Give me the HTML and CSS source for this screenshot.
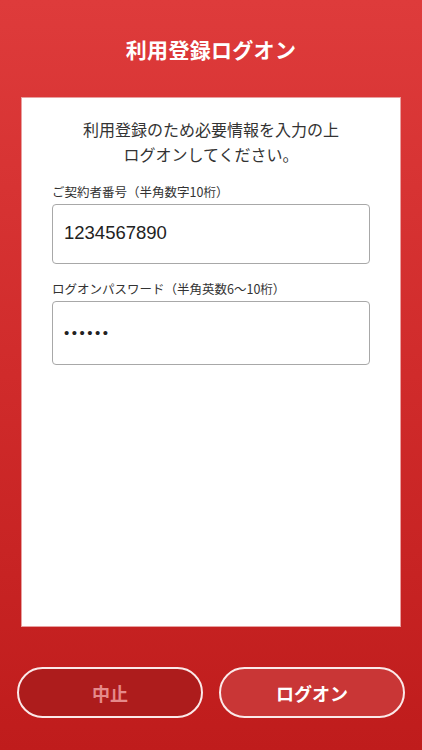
FILE: index.html
```html
<!DOCTYPE html>
<html lang="ja">
<head>
<meta charset="utf-8">
<link rel="stylesheet" href="styles.css">
</head>
<body>
<div class="screen">
  <h1 class="title">利用登録ログオン</h1>
  <div class="card">
    <p class="intro">利用登録のため必要情報を入力の上<br>ログオンしてください。</p>
    <div class="field">
      <div class="label">ご契約者番号（半角数字10桁）</div>
      <div class="input">1234567890</div>
    </div>
    <div class="field">
      <div class="label">ログオンパスワード（半角英数6〜10桁）</div>
      <div class="input pw">••••••</div>
    </div>
  </div>
  <div class="actions">
    <div class="btn cancel">中止</div>
    <div class="btn logon">ログオン</div>
  </div>
</div>
</body>
</html>
```
FILE: styles.css
```css
html, body {
  margin: 0;
  padding: 0;
}
body {
  font-family: "Noto Sans CJK JP", "Noto Sans", sans-serif;
}
.screen {
  width: 422px;
  height: 750px;
  background: linear-gradient(to bottom, #de3b3b 0%, #d02b2b 50%, #bf1c1c 100%);
  display: flex;
  flex-direction: column;
  align-items: center;
  box-sizing: border-box;
}
.title {
  margin: 0;
  height: 97px;
  line-height: 98px;
  font-size: 21px;
  font-weight: bold;
  color: #fff;
  letter-spacing: 0.3px;
}
.card {
  width: 380px;
  height: 530px;
  box-sizing: border-box;
  background: #fff;
  border: 1px solid #e8a0a0;
  padding: 19px 30px 0 30px;
}
.intro {
  margin: 0 0 17px 0;
  text-align: center;
  font-size: 16px;
  line-height: 25px;
  color: #333;
}
.field {
  margin-bottom: 17px;
}
.label {
  font-size: 12.5px;
  line-height: 16px;
  color: #333;
  margin-bottom: 4px;
}
.input {
  height: 60px;
  box-sizing: border-box;
  border: 1px solid #a8a8a8;
  border-radius: 4px;
  padding-left: 11px;
  font-family: "Liberation Sans", "Noto Sans CJK JP", sans-serif;
  font-size: 18.5px;
  line-height: 56px;
  color: #222;
}
.input.pw {
  height: 64px;
  line-height: 62px;
  font-size: 15px;
  letter-spacing: 2.5px;
}
.actions {
  margin-top: 40px;
  width: 388px;
  display: flex;
  justify-content: space-between;
}
.btn {
  width: 186px;
  height: 51px;
  box-sizing: border-box;
  border: 2px solid #fbe9e9;
  border-radius: 26px;
  display: flex;
  align-items: center;
  justify-content: center;
  font-size: 18px;
  font-weight: bold;
}
.cancel {
  background: #ad1c1c;
  color: #e58a8a;
}
.logon {
  background: #c93636;
  color: #fff;
}
```
